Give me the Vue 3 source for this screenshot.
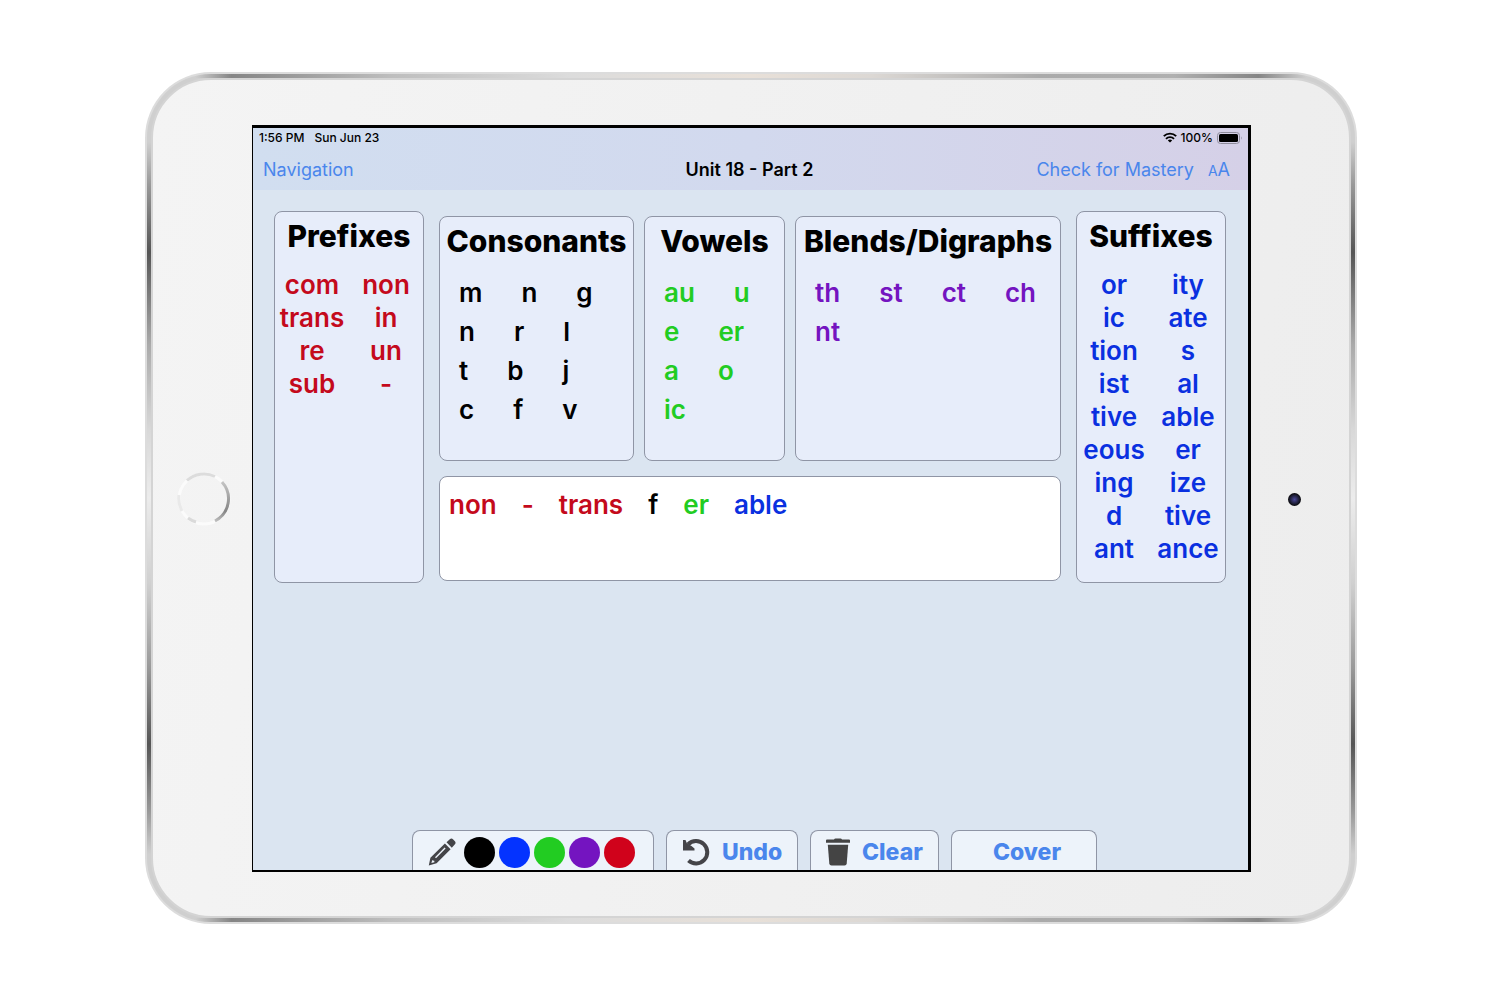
<script setup>
import { ref } from 'vue'

const prefixes = ['com', 'non', 'trans', 'in', 're', 'un', 'sub', '-']
const suffixes = [
  'or', 'ity', 'ic', 'ate', 'tion', 's', 'ist', 'al', 'tive', 'able',
  'eous', 'er', 'ing', 'ize', 'd', 'tive', 'ant', 'ance',
]
const banks = [
  { title: 'Consonants', tone: 'black', rows: [['m', 'n', 'g'], ['n', 'r', 'l'], ['t', 'b', 'j'], ['c', 'f', 'v']] },
  { title: 'Vowels', tone: 'green', rows: [['au', 'u'], ['e', 'er'], ['a', 'o'], ['ic']] },
  { title: 'Blends/Digraphs', tone: 'purple', rows: [['th', 'st', 'ct', 'ch'], ['nt']] },
]
const answer = ref([
  { text: 'non', tone: 'red' },
  { text: '-', tone: 'red' },
  { text: 'trans', tone: 'red' },
  { text: 'f', tone: 'black' },
  { text: 'er', tone: 'green' },
  { text: 'able', tone: 'blue' },
])
const add = (text, tone) => answer.value.push({ text, tone })
const pens = ['black', 'blue', 'green', 'purple', 'red']
</script>

<template>
  <div class="page">
    <div class="shell">
      <div class="rim">
        <div class="face">
          <div class="bezel">
            <svg class="home" viewBox="0 0 56 56" fill="none" stroke-width="3">
              <defs>
                <linearGradient id="ringDark" x1="0" y1="0" x2="0" y2="1">
                  <stop offset="0" stop-color="#c4c4c4" />
                  <stop offset="0.75" stop-color="#858585" />
                  <stop offset="1" stop-color="#bdbdbd" />
                </linearGradient>
              </defs>
              <circle cx="28" cy="28" r="25" stroke="#fbfbfb" />
              <path d="M11 9.500A25 25 0 0 1 39 5.500" stroke="#dcdcdc" />
              <path d="M3 24A25 25 0 0 0 6 40" stroke="#e9e9e9" />
              <path d="M12 47A25 25 0 0 0 20 51" stroke="#dadada" />
              <path d="M46 11A25 25 0 0 1 39 50" stroke="url(#ringDark)" />
            </svg>
          </div>
          <main class="screen">
            <header class="top">
              <div class="status">
                <span>1:56 PM</span>
                <span>Sun Jun 23</span>
                <span class="signal">
                  <svg width="14" height="11" viewBox="0 0 14 11" fill="none" stroke="#000" stroke-width="1.900">
                    <path d="M0.800 4.200A8.800 8.800 0 0 1 13.200 4.200" />
                    <path d="M3 6.800A5.600 5.600 0 0 1 11 6.800" />
                    <path d="M7 10.600L4.800 8.600A3.100 3.100 0 0 1 9.200 8.600Z" fill="#000" stroke="none" />
                  </svg>
                  <span>100%</span>
                  <svg width="26" height="12" viewBox="0 0 26 12">
                    <rect x="0.500" y="0.500" width="22" height="11" rx="3" fill="none" stroke="#8f8d9c" />
                    <rect x="2" y="2" width="19" height="8" rx="1.500" />
                    <path d="M24 4.200Q25.600 6 24 7.800Z" fill="#8f8d9c" />
                  </svg>
                </span>
              </div>
              <nav class="nav">
                <a href="#navigation">Navigation</a>
                <h1>Unit 18 - Part 2</h1>
                <span class="tools">
                  <a href="#mastery">Check for Mastery</a>
                  <a href="#text-size"><small>A</small>A</a>
                </span>
              </nav>
            </header>

            <section class="board">
              <section class="panel affix">
                <h2>Prefixes</h2>
                <div class="pairs">
                  <button v-for="(p, i) in prefixes" :key="i" class="tile red" @click="add(p, 'red')">{{ p }}</button>
                </div>
              </section>

              <div class="middle">
                <div class="banks">
                  <section v-for="b in banks" :key="b.title" class="panel bank">
                    <h2>{{ b.title }}</h2>
                    <div v-for="(row, r) in b.rows" :key="r" class="row">
                      <button v-for="t in row" :key="t" class="tile" :class="b.tone" @click="add(t, b.tone)">{{ t }}</button>
                    </div>
                  </section>
                </div>
                <div class="answer">
                  <span v-for="(t, i) in answer" :key="i" :class="t.tone">{{ t.text }}</span>
                </div>
              </div>

              <section class="panel affix">
                <h2>Suffixes</h2>
                <div class="pairs">
                  <button v-for="(s, i) in suffixes" :key="i" class="tile blue" @click="add(s, 'blue')">{{ s }}</button>
                </div>
              </section>
            </section>

            <footer class="dock">
              <div class="tab pens">
                <svg width="28" height="28" viewBox="0 0 28 28" fill="#444448">
                  <path d="M18.500 4.300L21.800 1.200Q23.500 -0.300 25.200 1.400L26.900 3.200Q28.300 4.900 26.700 6.600L23.800 9.700Z" />
                  <path fill-rule="evenodd" d="M16.900 5.500L22.600 11.300L8.600 25.200L0.800 27.600L2.400 19.800ZM16.600 9.600L7 19.200L8 20.200L17.600 10.600ZM4.300 22L3.400 25.100L6.400 24.200L6.300 22.700L4.900 22.600Z" />
                </svg>
                <button v-for="p in pens" :key="p" class="pen" :class="p" :aria-label="p"></button>
              </div>
              <button class="tab undo">
                <svg width="28" height="28" viewBox="0 0 28 28" fill="none">
                  <path d="M6 6.500A11.200 11.200 0 1 1 6.500 22.500" stroke="#444448" stroke-width="4" />
                  <path d="M1 2L1 12.500H12.500V10.500L9.500 8L5 5.500L3.500 2Z" fill="#444448" />
                </svg>
                Undo
              </button>
              <button class="tab clear">
                <svg width="24" height="28" viewBox="0 0 24 28" fill="#444">
                  <path d="M8 1.500Q8.500 0.500 9.500 0.500H14.500Q15.500 0.500 16 1.500H23Q24 1.500 24 2.500V4.800H0V2.500Q0 1.500 1 1.500Z" />
                  <path d="M1.800 6.800H22.200L20.700 25.500Q20.500 27.500 18.500 27.500H5.500Q3.500 27.500 3.300 25.500Z" />
                </svg>
                Clear
              </button>
              <button class="tab cover">Cover</button>
            </footer>
          </main>
          <div class="bezel right"><span class="camera"></span></div>
        </div>
      </div>
    </div>
  </div>
</template>

<style>
body {
  margin: 0;
  background: #fff;
}
</style>

<style scoped>
* {
  box-sizing: border-box;
}
.page {
  display: flex;
  min-height: 100vh;
  padding: 72px 143px 76px 145px;
  font-family: Inter, "Liberation Sans", sans-serif;
  color: #000;
}
.shell {
  display: flex;
  flex: 1;
  padding: 2px;
  border-radius: 66px;
  background: #dcdcdc;
}
.rim {
  --along: #cfcfcf 4%, #858585 7%, #bdbdbd 20%, #dcdcdc 35%, #e8e0d8 50%, #dcd8d4 60%, #aaa 74%, #b0b0b0 85%, #858585 92%, #cfcfcf 96%;
  --down: #cfcfcf 8%, #999 13%, #555 21%, #aaa 32%, #d8d8d8 42%, #ececec 50%, #d0d0d0 60%, #999 70%, #555 79%, #999 87%, #cfcfcf 92%;
  display: flex;
  flex: 1;
  padding: 4px;
  border-radius: 64px;
  background:
    linear-gradient(90deg, var(--along)) top / 100% 4px no-repeat,
    linear-gradient(90deg, var(--along)) bottom / 100% 4px no-repeat,
    linear-gradient(var(--down)) left / 4px 100% no-repeat,
    linear-gradient(var(--down)) right / 4px 100% no-repeat,
    #cfcfcf;
}
.face {
  display: grid;
  flex: 1;
  grid-template-columns: 99px 1fr 98px;
  padding: 45px 0 44px;
  border: 2px solid #d4d4d4;
  border-radius: 60px;
  background: linear-gradient(100deg, #f4f4f4, #ededed);
}
.bezel {
  display: flex;
  align-items: center;
  justify-content: center;
  padding-left: 2px;
}
.bezel.right {
  padding: 2px 12px 0 0;
}
.home {
  flex: none;
  width: 56px;
  height: 56px;
}
.camera {
  width: 13px;
  height: 13px;
  border-radius: 50%;
  background: radial-gradient(#4a489a, #20203c 45%, #0c0c12 65%);
}
.screen {
  display: flex;
  flex-direction: column;
  border: solid #000;
  border-width: 3px 3px 2px 1px;
  background: #dbe5f1;
}
.top {
  background: linear-gradient(90deg, #d1def0, #d2d9ee 50%, #d5d0e7);
}
.status {
  display: flex;
  align-items: center;
  gap: 10px;
  height: 19px;
  padding: 0 5px 0 6px;
  font-size: 12px;
  font-weight: 500;
}
.signal {
  display: flex;
  align-items: center;
  gap: 4px;
  margin-left: auto;
}
.nav {
  display: grid;
  grid-template-columns: 1fr auto 1fr;
  align-items: center;
  height: 43px;
  padding: 2px 18px 0 10px;
  font-size: 18px;
}
.nav a {
  color: #4a86ec;
  text-decoration: none;
}
.nav small {
  font-size: 14px;
}
h1 {
  margin: 0;
  padding-left: 6px;
  font-size: 18px;
  font-weight: 600;
}
.tools {
  display: flex;
  align-items: baseline;
  justify-content: flex-end;
  gap: 14px;
}
.board {
  display: grid;
  grid-template-columns: 150px 1fr 150px;
  gap: 15px;
  padding: 21px 22px 21px 21px;
}
.panel {
  border: 1px solid #8f95a5;
  border-radius: 8px;
  background: #e7edfa;
}
h2 {
  margin: 0;
  font-size: 30px;
  font-weight: 800;
  line-height: 49px;
  text-align: center;
  white-space: nowrap;
}
.pairs {
  display: grid;
  grid-template-columns: 1fr 1fr;
  padding: 7px 0 17px;
}
.tile {
  padding: 0;
  border: 0;
  background: none;
  font: inherit;
  font-size: 26px;
  font-weight: 600;
  line-height: 33px;
  text-align: center;
}
.middle {
  display: flex;
  flex-direction: column;
  gap: 15px;
  padding: 5px 0 2px;
}
.banks {
  display: grid;
  flex: 1;
  grid-template-columns: 195fr 141fr 266fr;
  gap: 10px;
}
.row {
  display: flex;
  gap: 39px;
  height: 39px;
  padding: 0 19px;
}
.bank h2 {
  margin-bottom: 7px;
}
.answer {
  display: flex;
  gap: 25px;
  height: 105px;
  padding: 11px 9px;
  border: 1px solid #8f95a5;
  border-radius: 8px;
  background: #fff;
  font-size: 26px;
  font-weight: 600;
  line-height: 33px;
}
.black { color: #000; }
.blue { color: #0a30e0; }
.green { color: #22cc22; }
.purple { color: #7414c0; }
.red { color: #c40a1c; }
.dock {
  display: flex;
  justify-content: center;
  gap: 12px;
  margin-top: auto;
  padding-left: 8px;
}
.tab {
  display: flex;
  align-items: center;
  height: 40px;
  padding: 3px 0 0;
  border: 1px solid #8f95a5;
  border-bottom: 0;
  border-radius: 8px 8px 0 0;
  background: #edf3fa;
  color: #4a86ec;
  font: inherit;
  font-size: 23px;
  font-weight: 800;
}
.pens {
  gap: 4px;
  width: 242px;
  padding-left: 15px;
}
.pens svg {
  margin-right: 4px;
}
.pen {
  width: 31px;
  height: 31px;
  padding: 0;
  border: 0;
  border-radius: 50%;
  background: currentColor;
}
.pen.blue { color: #0433ff; }
.pen.red { color: #d0021b; }
.undo {
  gap: 12px;
  width: 132px;
  padding-left: 15px;
}
.clear {
  gap: 12px;
  width: 129px;
  padding-left: 15px;
}
.cover {
  justify-content: center;
  width: 146px;
  padding-left: 6px;
}
</style>
